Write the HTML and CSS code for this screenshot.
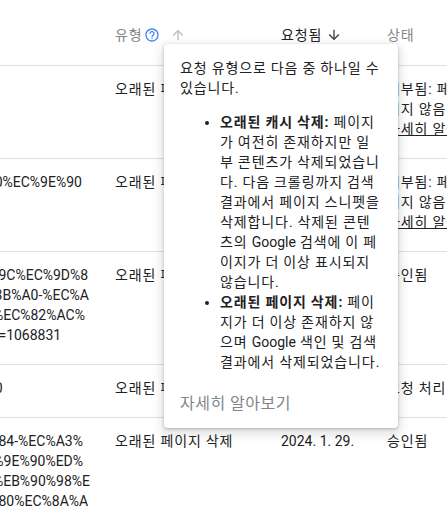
FILE: index.html
```html
<!DOCTYPE html>
<html lang="ko">
<head>
<meta charset="utf-8">
<title>삭제 요청</title>
<link rel="stylesheet" href="styles.css">
</head>
<body>
<div class="viewport">
  <div class="table">
    <div class="row head">
      <div class="cell url"></div>
      <div class="cell type"><span class="ko">유형</span>
        <svg class="help" viewBox="0 0 24 24"><path d="M11 18h2v-2h-2v2zm1-16C6.48 2 2 6.48 2 12s4.48 10 10 10 10-4.48 10-10S17.52 2 12 2zm0 18c-4.41 0-8-3.59-8-8s3.59-8 8-8 8 3.59 8 8-3.59 8-8 8zm0-14c-2.21 0-4 1.79-4 4h2c0-1.1.9-2 2-2s2 .9 2 2c0 2-3 1.75-3 5h2c0-2.25 3-2.5 3-5 0-2.21-1.79-4-4-4z"/></svg>
        <svg class="arrow up" viewBox="0 0 24 24"><path d="M4 12l1.41 1.41L11 7.83V20h2V7.83l5.58 5.59L20 12l-8-8-8 8z"/></svg>
      </div>
      <div class="cell date"><span class="ko active">요청됨</span>
        <svg class="arrow down" viewBox="0 0 24 24"><path d="M20 12l-1.41-1.41L13 16.17V4h-2v12.17l-5.58-5.59L4 12l8 8 8-8z"/></svg>
      </div>
      <div class="cell status"><span class="ko">상태</span></div>
    </div>

    <div class="row">
      <div class="cell url"></div>
      <div class="cell type ko">오래된 페이지 삭제</div>
      <div class="cell date">2024. 2. 5.</div>
      <div class="cell status ko">거부됨: 페이지<br>이지 않음<br><a class="more" href="#">자세히 알아보기</a></div>
    </div>

    <div class="row">
      <div class="cell url"><span class="line">%EC%9D0%EC%9E%90</span></div>
      <div class="cell type ko">오래된 페이지 삭제</div>
      <div class="cell date">2024. 2. 1.</div>
      <div class="cell status ko">거부됨: 페이지<br>이지 않음<br><a class="more" href="#">자세히 알아보기</a></div>
    </div>

    <div class="row">
      <div class="cell url">
        <span class="line">%EC%9A-9C%EC%9D%8</span>
        <span class="line">%EC%9A3B%A0-%EC%A</span>
        <span class="line">%EB%92%EC%82%AC%</span>
        <span class="line">%EC%9A-=1068831</span>
      </div>
      <div class="cell type ko">오래된 페이지 삭제</div>
      <div class="cell date">2024. 1. 30.</div>
      <div class="cell status ko">승인됨</div>
    </div>

    <div class="row">
      <div class="cell url"><span class="line">%EC%9D0</span></div>
      <div class="cell type ko">오래된 페이지 삭제</div>
      <div class="cell date">2024. 1. 30.</div>
      <div class="cell status ko">요청 처리 중</div>
    </div>

    <div class="row">
      <div class="cell url">
        <span class="line">%EC%9A-84-%EC%A3%</span>
        <span class="line">%E0%9A%9E%90%ED%</span>
        <span class="line">%EB%92%EB%90%98%E</span>
        <span class="line">%EC%9A-80%EC%8A%A</span>
      </div>
      <div class="cell type ko">오래된 페이지 삭제</div>
      <div class="cell date">2024. 1. 29.</div>
      <div class="cell status ko">승인됨</div>
    </div>
  </div>

  <div class="popover">
    <p class="intro ko">요청 유형으로 다음 중 하나일 수 있습니다.</p>
    <ul class="list ko">
      <li><b>오래된 캐시 삭제:</b> 페이지가 여전히 존재하지만 일<br>부 콘텐츠가 삭제되었습니다. 다음 크롤링까지 검색 결과에서 페이지 스니펫을 삭제합니다. 삭제된 콘텐츠의 <span class="latin">Google</span> 검색에 이 페이지가 더 이상 표시되지 않습니다.</li>
      <li><b>오래된 페이지 삭제:</b> 페이지가 더 이상 존재하지 않으며 <span class="latin">Google</span> 색인 및 검색 결과에서 삭제되었습니다.</li>
    </ul>
    <a class="learn ko" href="#">자세히 알아보기</a>
  </div>
</div>
</body>
</html>
```
FILE: styles.css
```css
html, body {
  margin: 0;
  padding: 0;
  background: #fff;
}

body {
  font-family: Roboto, "Noto Sans CJK KR", sans-serif;
  font-size: 14px;
  line-height: 20px;
  color: #202124;
}

.ko {
  letter-spacing: 0.9px;
  word-spacing: -0.3px;
}

.latin {
  letter-spacing: 0;
}

.viewport {
  position: relative;
  width: 447px;
  height: 508px;
  overflow: hidden;
}

.table {
  width: 560px;
  margin-left: -60px;
}

.row {
  display: grid;
  grid-template-columns: 175px 166px 106px 1fr;
  border-bottom: 1px solid #e0e0e0;
  padding: 13px 0 19px;
}

.row:last-child {
  border-bottom: 0;
}

.row.head {
  height: 66px;
  box-sizing: border-box;
  padding: 25px 0 0;
  color: #80868b;
}

.line {
  display: block;
  white-space: nowrap;
}

.head .cell {
  white-space: nowrap;
}

.help {
  width: 16px;
  height: 16px;
  fill: #4285f4;
  vertical-align: -3px;
  margin-left: -2px;
}

.arrow {
  width: 16px;
  height: 16px;
  vertical-align: -3px;
}

.arrow.up {
  fill: #bdbdbd;
  margin-left: 6px;
}

.arrow.down {
  fill: #3c4043;
}

.active {
  color: #202124;
}

.status.ko {
  white-space: nowrap;
}

.more {
  color: #202124;
  text-decoration: underline;
}

.popover {
  position: absolute;
  left: 164px;
  top: 44px;
  width: 234px;
  height: 384px;
  box-sizing: border-box;
  padding: 14px 16px;
  background: #fff;
  border-radius: 4px;
  box-shadow: 0 1px 3px rgba(60, 64, 67, 0.3), 0 4px 10px 3px rgba(60, 64, 67, 0.15);
}

.intro {
  margin: 0 0 14px;
}

.list {
  margin: 0 0 20px;
  padding-left: 40px;
}

.learn {
  display: block;
  font-size: 16px;
  line-height: 24px;
  letter-spacing: 0.55px;
  color: #80868b;
  text-decoration: none;
}
```
